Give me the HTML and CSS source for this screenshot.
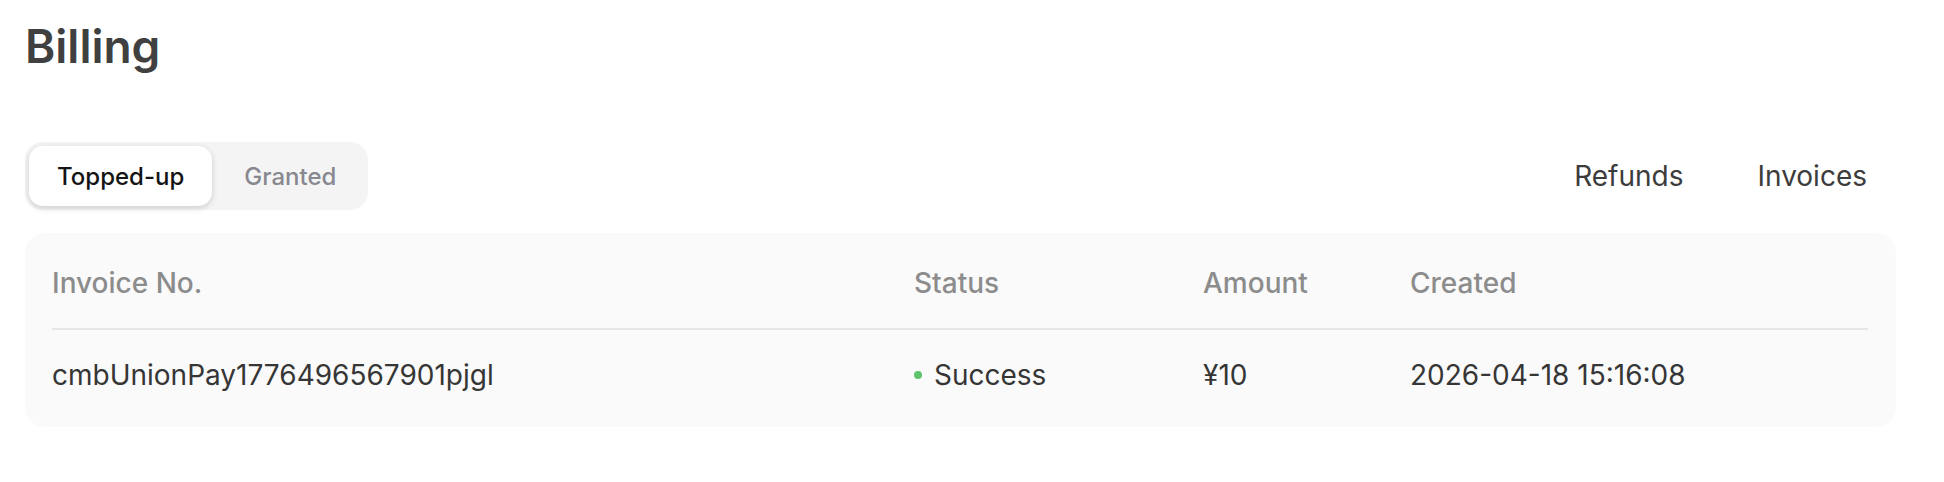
FILE: index.html
```html
<!DOCTYPE html>
<html lang="en">
<head>
<meta charset="utf-8">
<title>Billing</title>
<link rel="stylesheet" href="styles.css">
</head>
<body>
<main class="page">
  <h1 class="title">Billing</h1>
  <div class="toolbar">
    <div class="tabs">
      <button class="tab tab-active">Topped-up</button>
      <button class="tab">Granted</button>
    </div>
    <div class="links">
      <button class="link">Refunds</button>
      <button class="link">Invoices</button>
    </div>
  </div>
  <section class="card">
    <div class="grid head">
      <div class="cell">Invoice No.</div>
      <div class="cell">Status</div>
      <div class="cell">Amount</div>
      <div class="cell">Created</div>
    </div>
    <div class="grid row">
      <div class="cell">cmbUnionPay1776496567901pjgl</div>
      <div class="cell status"><span class="dot"></span>Success</div>
      <div class="cell">¥10</div>
      <div class="cell">2026-04-18 15:16:08</div>
    </div>
  </section>
</main>
</body>
</html>
```

FILE: styles.css
```css
* { box-sizing: border-box; }
html, body { margin: 0; padding: 0; background: #ffffff; }
body {
  font-family: Inter, "Noto Sans", "Liberation Sans", sans-serif;
  color: #333333;
}
.page {
  padding: 20px 48px 0 25px;
}
.title {
  margin: 0;
  font-size: 46px;
  line-height: 53px;
  font-weight: 600;
  color: #404040;
  letter-spacing: 0;
}
.toolbar {
  margin-top: 69px;
  display: flex;
  align-items: center;
  justify-content: space-between;
  height: 68px;
}
.tabs {
  display: flex;
  gap: 4px;
  padding: 4px;
  background: #f4f4f5;
  border-radius: 18px;
}
.tab {
  font-family: inherit;
  border: 0;
  background: transparent;
  height: 60px;
  padding: 0 28px;
  font-size: 24px;
  font-weight: 500;
  color: #88888f;
  border-radius: 14px;
  cursor: pointer;
}
.tab-active {
  background: #ffffff;
  color: #141414;
  box-shadow: 0 2px 6px rgba(0, 0, 0, 0.16);
}
.links {
  display: flex;
  gap: 16px;
}
.link {
  font-family: inherit;
  border: 0;
  background: transparent;
  padding: 0 29px;
  height: 60px;
  font-size: 28px;
  font-weight: 400;
  color: #3c3c3c;
  cursor: pointer;
}
.card {
  margin-top: 23px;
  background: #fafafa;
  border-radius: 20px;
  padding: 0 28px 0 27px;
}
.grid {
  display: grid;
  grid-template-columns: 862px 289px 207px 1fr;
  font-size: 28px;
  line-height: 42px;
}
.head {
  padding: 29px 0 24px;
  border-bottom: 2px solid #e6e6e6;
  color: #8c8c8c;
  font-weight: 500;
}
.row {
  padding: 24px 0 31px;
  color: #363636;
}
.status {
  display: flex;
  align-items: center;
}
.dot {
  width: 8px;
  height: 8px;
  border-radius: 50%;
  background: #5dc46b;
  margin-right: 12px;
}
```
